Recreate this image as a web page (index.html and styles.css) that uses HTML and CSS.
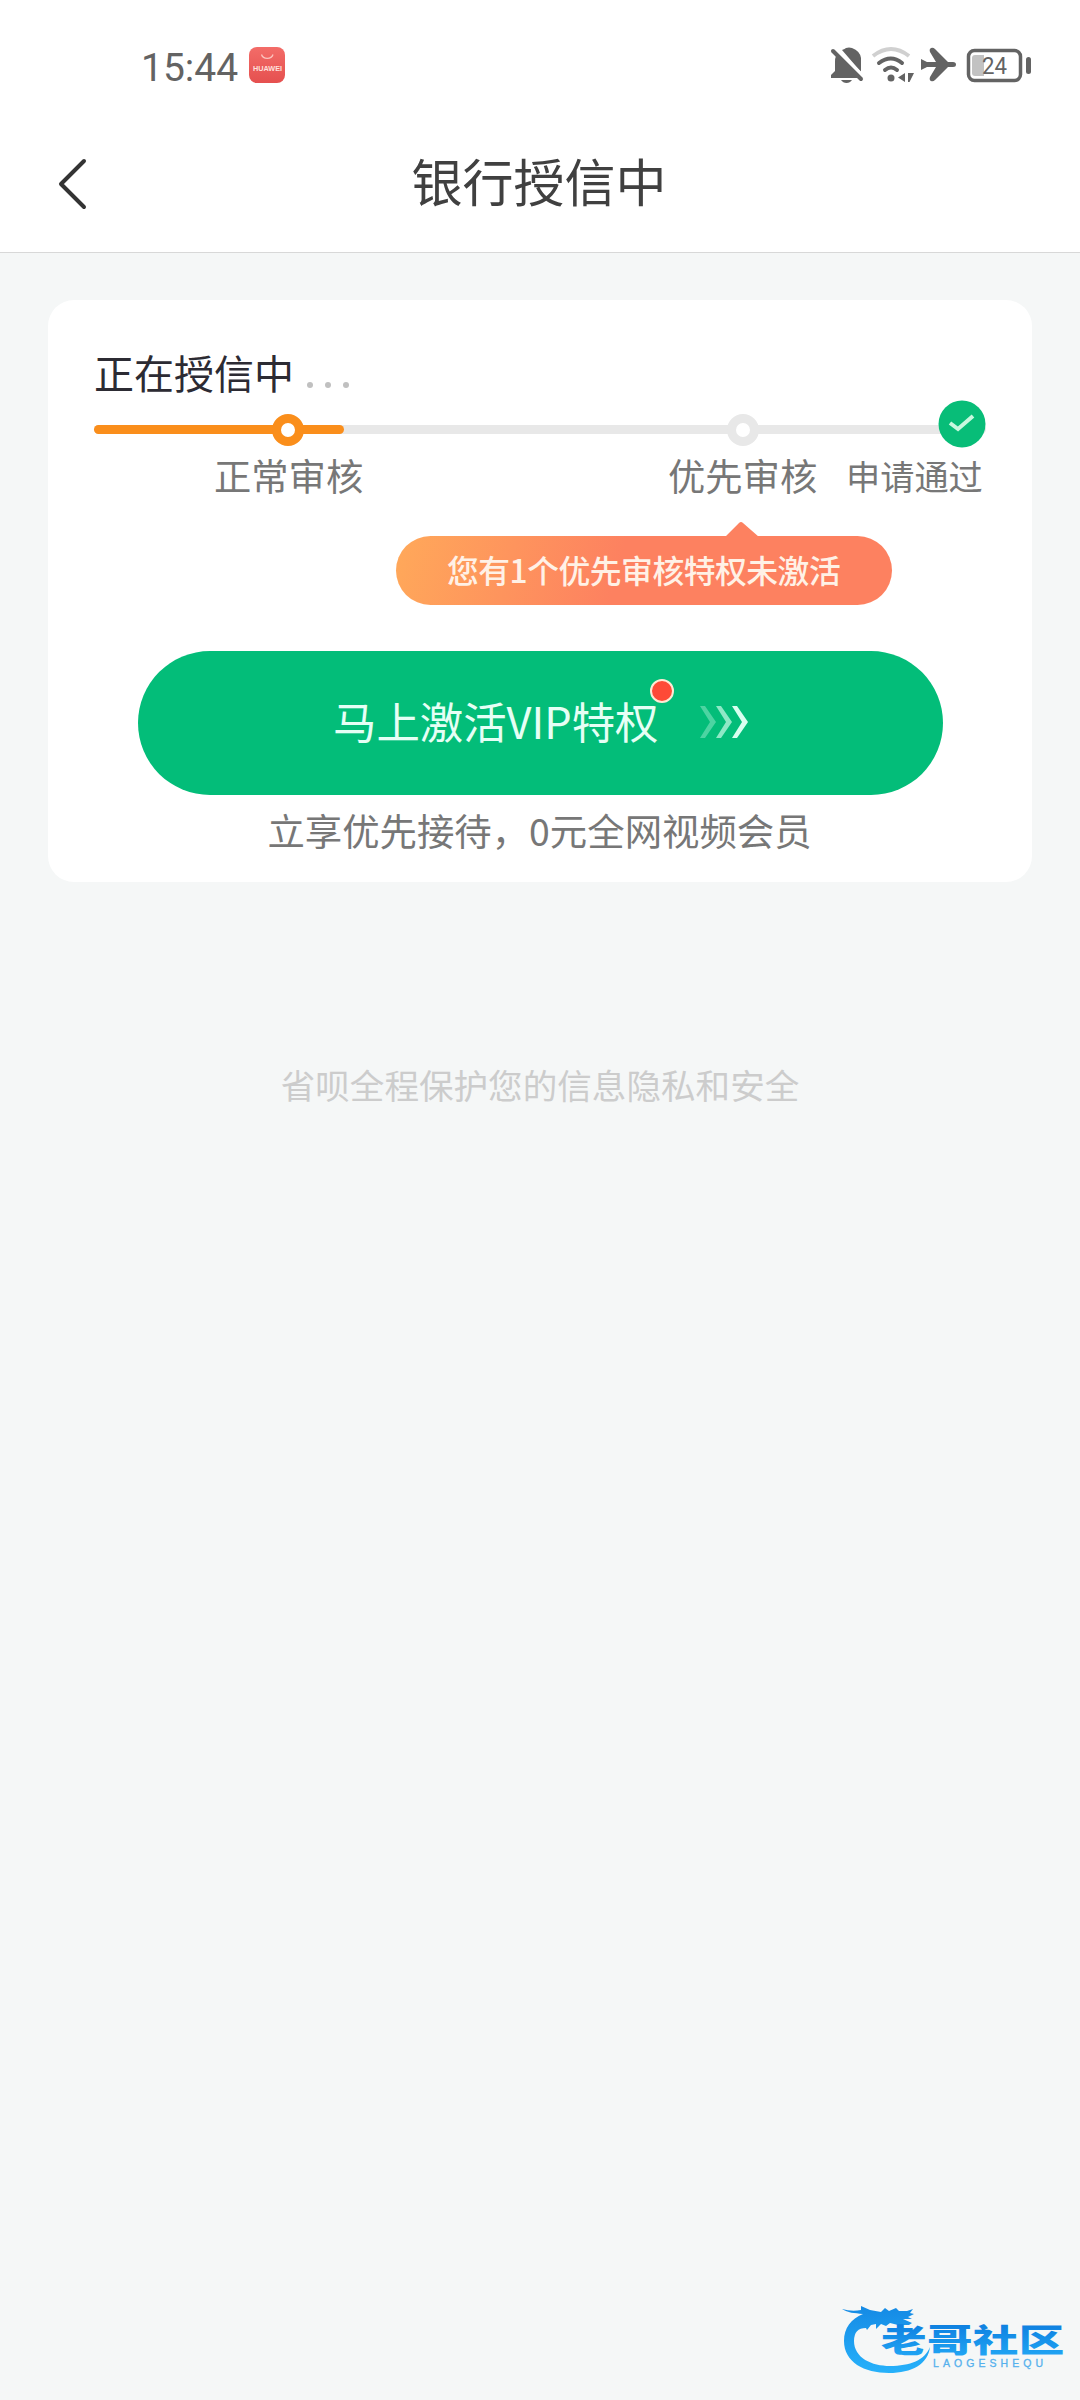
FILE: index.html
```html
<!DOCTYPE html>
<html lang="zh-CN">
<head>
<meta charset="utf-8">
<title>银行授信中</title>
<link rel="stylesheet" href="styles.css">
</head>
<body>
<header class="top">
  <div class="statusbar">
    <span class="time">15:44</span>
    <svg class="app" viewBox="0 0 36 36" width="36" height="36">
      <defs><linearGradient id="red" x2="0" y2="1"><stop stop-color="#f36c68"/><stop offset="1" stop-color="#e5504f"/></linearGradient></defs>
      <rect width="36" height="36" rx="8" fill="url(#red)"/>
      <path d="M12.500 7.500a6 5.500 0 0 0 11.500 0" fill="none" stroke="#fbc3bd" stroke-width="1.300"/>
      <text x="4" y="23.500" textLength="29" lengthAdjust="spacingAndGlyphs" class="app-name">HUAWEI</text>
    </svg>
    <svg class="icons" viewBox="0 0 210 44" width="210" height="44">
      <g fill="#636363">
        <path d="M8 14L32 36H3v-3l4-4V20q0-4 1-6zM14 8q3-1 4-2 3-1 6 0 8 3 9 10v14z"/>
        <path d="M13 38h11q-2 3-5.500 3T13 38z"/>
        <circle cx="63" cy="36" r="3.500"/>
        <path d="M77 31v9l-7-4.500zM80 31h6l-4.500 9H80z"/>
        <path d="M93 17l6 3h9l-6-10q-1-3 1-4 2-1 4 1l13 13h5q3 0 3 2.500t-3 2.500h-5l-13 13q-2 2-4 1-2-1-1-4l6-10h-9l-6 3z"/>
        <rect x="198" y="15" width="5" height="17" rx="2.500"/>
      </g>
      <path d="M4 10l30 30" stroke="#fff" stroke-width="3.500" transform="translate(4 -3)"/>
      <g fill="none" stroke="#636363" stroke-width="4" stroke-linecap="round">
        <path d="M5 9l28 28"/>
        <path d="M57 28q6-5 12 0M51 21q12-9 23 0"/>
      </g>
      <path d="M45 14q18-14 36 0" fill="none" stroke="#d0d0d0" stroke-width="4"/>
      <rect x="140.500" y="8.500" width="52" height="30" rx="6" fill="none" stroke="#636363" stroke-width="3.500"/>
      <path d="M147 13h9v21h-9q-3 0-3-3V16q0-3 3-3z" fill="#c2c2c2"/>
      <text x="154" y="32" textLength="25" lengthAdjust="spacingAndGlyphs" class="battery">24</text>
    </svg>
  </div>
  <div class="nav">
    <svg class="back" viewBox="0 0 32 56" width="32" height="56"><path d="M29 5L6 28 29 51" fill="none" stroke="#333" stroke-width="4" stroke-linecap="round" stroke-linejoin="round"/></svg>
    <h1 class="title">银行授信中</h1>
  </div>
</header>
<main>
  <section class="card">
    <div class="state"><span>正在授信中</span><i class="dot"></i><i class="dot"></i><i class="dot"></i></div>
    <div class="track">
      <div class="fill"></div>
      <i class="node node-on"></i>
      <i class="node node-next"></i>
      <svg class="done" viewBox="0 0 48 48" width="48" height="48"><circle cx="24" cy="24" r="23.500" fill="#08bd78"/><path d="M12 23l8 6 15-13" fill="none" stroke="#c9f8df" stroke-width="4"/></svg>
    </div>
    <div class="labels"><span class="label-a">正常审核</span><span class="label-b">优先审核</span><span class="label-c">申请通过</span></div>
    <div class="tip">您有1个优先审核特权未激活<svg class="arrow" viewBox="0 0 34 16" width="34" height="16"><path d="M0 16L14 2q2-2 4 0l16 14z" fill="#fd8160"/></svg></div>
    <button class="cta">
      <span class="cta-text">马上激活VIP特权<i class="badge"></i></span>
      <svg viewBox="0 0 52 34" width="52" height="34" fill="#d9fff0">
        <path opacity=".35" d="M1 1h5l11 16L6 33H1l10-16z"/>
        <path opacity=".65" d="M17 1h5l11 16-11 16h-5l10-16z"/>
        <path d="M33 1h5l11 16-11 16h-5l10-16z"/>
      </svg>
    </button>
    <p class="perk">立享优先接待，0元全网视频会员</p>
  </section>
  <p class="safe">省呗全程保护您的信息隐私和安全</p>
</main>
<footer class="brand">
  <svg viewBox="0 0 250 110" width="250" height="110">
    <defs><linearGradient id="blue" gradientUnits="userSpaceOnUse" x1="0" y1="15" x2="0" y2="84"><stop stop-color="#1489e4"/><stop offset="1" stop-color="#27b2fb"/></linearGradient>
    <linearGradient id="word" x2="0" y2="1"><stop offset=".2" stop-color="#0e7fe0"/><stop offset="1" stop-color="#23aaf6"/></linearGradient></defs>
    <path fill="url(#blue)" d="M12 19q10 3 19 1l0-4 9 4 11 2 4-4 4 3 7-3 3 3 8 0 6-2-3 4 4 1-6 3 4 2-9 0 9 4-3 2H68l-8-2-4 3-5-2-5 5v-5l-5 1-4 5-1-2Q24 38 24 51C24 68 42 76 60 76 80 76 95 70 100 57 98 74 82 83 59 83 34 83 14 72 14 51 14 38 21 29 33 24 24 23 18 23 12 19z"/>
    <g transform="translate(51 64) scale(1.060 .75)"><text class="wordmark" x="0" y="-3" textLength="173" lengthAdjust="spacing">老哥社区</text></g>
    <text class="latin" x="103" y="76.500" textLength="110">LAOGESHEQU</text>
  </svg>
</footer>
</body>
</html>
```
FILE: styles.css
```css
* { box-sizing: border-box; }
body { margin: 0; width: 1080px; height: 2400px; display: flex; flex-direction: column; background: #f5f7f7; font-family: "Noto Sans CJK SC", sans-serif; }
h1, p { margin: 0; font-weight: 400; white-space: nowrap; }
svg { display: block; flex: none; }
.top { height: 253px; background: #fff; border-bottom: 1px solid #d8d8d8; }
.statusbar { height: 132px; display: flex; align-items: center; padding: 0 42px 0 141px; }
.time { width: 108px; font: 39px/40px Roboto, sans-serif; color: #636363; padding-top: 4px; }
.app { margin-top: -2px; }
.app-name { font: 700 7px "Liberation Sans", sans-serif; fill: #ffe0dc; }
.icons { margin-left: auto; margin-top: -4px; }
.battery { font: 24px Roboto, sans-serif; fill: #636363; }
.nav { height: 104px; display: grid; grid-template-columns: 130px 1fr 130px; align-items: center; }
.back { margin-left: 55px; }
.title { font-size: 51px; line-height: 80px; text-align: center; color: #404040; padding: 0 2px 8px 0; }
main { flex: 1; padding: 47px 48px 0; }
.card { height: 582px; border-radius: 26px; background: #fff; padding: 47px 46px 0; }
.state { height: 78px; display: flex; font-size: 40px; line-height: 50px; color: #2c2b33; }
.state span { width: 213px; }
.dot { width: 6px; height: 6px; border-radius: 50%; background: #c0c0c0; margin: 35px 12px 0 0; }
.track { position: relative; height: 9px; border-radius: 5px; background: #e8e8e8; }
.fill { width: 250px; height: 9px; border-radius: 5px; background: #fa8e1b; }
.node { position: absolute; top: -11px; width: 32px; height: 32px; border-radius: 50%; background: #fff; border: 9px solid #e8e8e8; }
.node-on { left: 178px; border-color: #fa8e1b; }
.node-next { left: 633px; }
.done { position: absolute; left: 844px; top: -25px; }
.labels { display: flex; align-items: center; height: 60px; margin-top: 11px; color: #777; font-size: 37.300px; line-height: 60px; }
.label-a { width: 454px; margin-left: 120px; }
.label-b { width: 178px; }
.label-c { font-size: 34.200px; white-space: nowrap; }
.tip { position: relative; width: 496px; height: 69px; margin: 31px 0 0 302px; border-radius: 35px; background: linear-gradient(105deg, #ffa75a 2%, #fd8160 45%); color: #fff1e6; font-size: 31.800px; line-height: 67px; padding-left: 51px; letter-spacing: -.5px; font-weight: 500; white-space: nowrap; }
.arrow { position: absolute; left: 329px; top: -15px; }
.cta { width: 805px; height: 144px; margin: 46px 0 0 44px; padding: 0 0 2px 195px; border: 0; border-radius: 72px; background: #03bd79; display: flex; align-items: center; gap: 41px; font: 43.400px "Noto Sans CJK SC", sans-serif; color: #e5fff5; }
.cta-text { position: relative; line-height: 60px; padding-bottom: 4px; white-space: nowrap; }
.badge { position: absolute; right: -16px; top: -11px; width: 24px; height: 24px; border-radius: 50%; border: 2px solid #ffe9d5; background: #fe4a37; }
.perk { margin-top: 5px; text-align: center; font-size: 37.400px; line-height: 60px; color: #777; padding-right: 1px; }
.safe { margin-top: 172px; text-align: center; font-size: 34.600px; line-height: 60px; color: #ccc; }
.brand { height: 110px; display: flex; justify-content: flex-end; }
.wordmark { font: 900 43px "Noto Sans CJK SC", sans-serif; fill: url(#word); }
.latin { font: 10.500px "Liberation Sans", sans-serif; fill: #55b1ed; stroke: #55b1ed; stroke-width: .3; }
```
